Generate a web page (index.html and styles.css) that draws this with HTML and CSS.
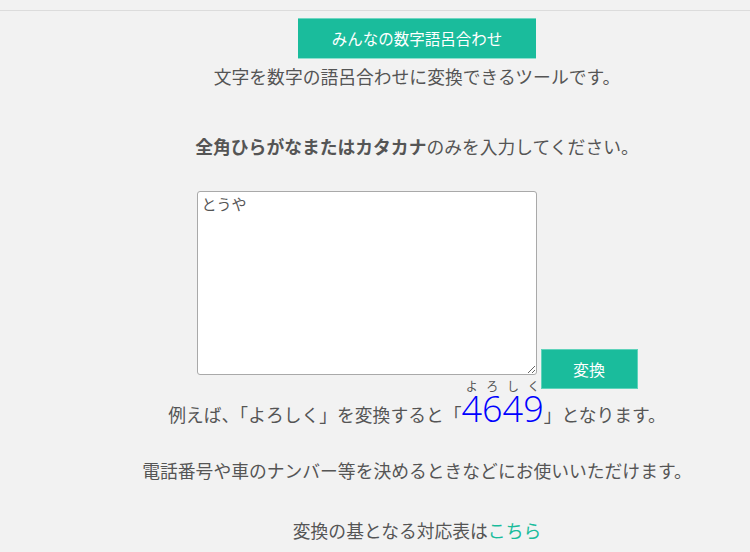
FILE: index.html
```html
<!DOCTYPE html>
<html lang="ja">
<head>
    <meta charset="UTF-8">
    <meta name="viewport" content="width=device-width, initial-scale=1.0">
    <title>みんなの数字語呂合わせ</title>
    <link rel="stylesheet" href="styles.css">
</head>
<body>
    <div class="topbar"></div>
    <main class="content">
        <h1 class="title">みんなの数字語呂合わせ</h1>
        <p class="lead">文字を数字の語呂合わせに変換できるツールです。</p>
        <p class="notice"><b>全角ひらがなまたはカタカナ</b>のみを入力してください。</p>
        <form class="convert-form">
            <textarea name="kana">とうや</textarea>
            <button type="submit">変換</button>
        </form>
        <p class="example">例えば、「よろしく」を変換すると「<ruby class="num">4649<rt>よろしく</rt></ruby>」となります。</p>
        <p class="usage">電話番号や車のナンバー等を決めるときなどにお使いいただけます。</p>
        <p class="table-link">変換の基となる対応表は<a href="#">こちら</a></p>
    </main>
</body>
</html>
```

FILE: styles.css
```css
body {
    margin: 0;
    background-color: #f2f2f2;
    color: #555;
    font-family: "Noto Sans CJK JP", "Noto Sans", sans-serif;
    font-size: 17.8px;
    line-height: 26px;
}
.topbar {
    height: 10px;
    border-bottom: 1px solid #dcdcdc;
}
.content {
    padding-left: 84px;
    text-align: center;
}
.title {
    display: inline-block;
    width: 238px;
    height: 41px;
    margin: 7px 0 0;
    background-color: #1abc9c;
    border-top: 1px solid #6fd6c1;
    border-bottom: 1px solid #8ee0cf;
    box-sizing: border-box;
    color: #fff;
    font-size: 15.5px;
    font-weight: normal;
    line-height: 39px;
}
p {
    margin: 0;
}
.lead {
    margin-top: 4px;
}
.notice {
    margin-top: 44px;
}
.notice b {
    font-weight: bold;
}
.convert-form {
    display: flex;
    justify-content: center;
    align-items: flex-start;
    gap: 4px;
    margin-top: 32px;
}
textarea {
    width: 340px;
    height: 184px;
    box-sizing: border-box;
    padding: 1px 4px;
    border: 1px solid #a9a9a9;
    border-radius: 3px;
    background: #fff;
    color: #555;
    font-family: "Noto Sans CJK JP", sans-serif;
    font-size: 15px;
    line-height: 22px;
}
button {
    width: 97px;
    height: 40px;
    margin-top: 158px;
    border: 1px solid #5fd3bb;
    background-color: #1abc9c;
    color: #fff;
    font-family: "Noto Sans CJK JP", sans-serif;
    font-size: 16px;
    cursor: pointer;
}
.example {
    margin-top: -9px;
    line-height: 46px;
}
.num {
    color: #0000ff;
    font-family: "Open Sans", "Liberation Sans", sans-serif;
    font-size: 36px;
    font-weight: 300;
}
.num rt {
    color: #555;
    font-family: "Noto Sans CJK JP", sans-serif;
    font-size: 12px;
    font-weight: normal;
}
.usage {
    margin-top: 20px;
}
.table-link {
    margin-top: 34px;
}
a {
    color: #1abc9c;
    text-decoration: none;
}
```
